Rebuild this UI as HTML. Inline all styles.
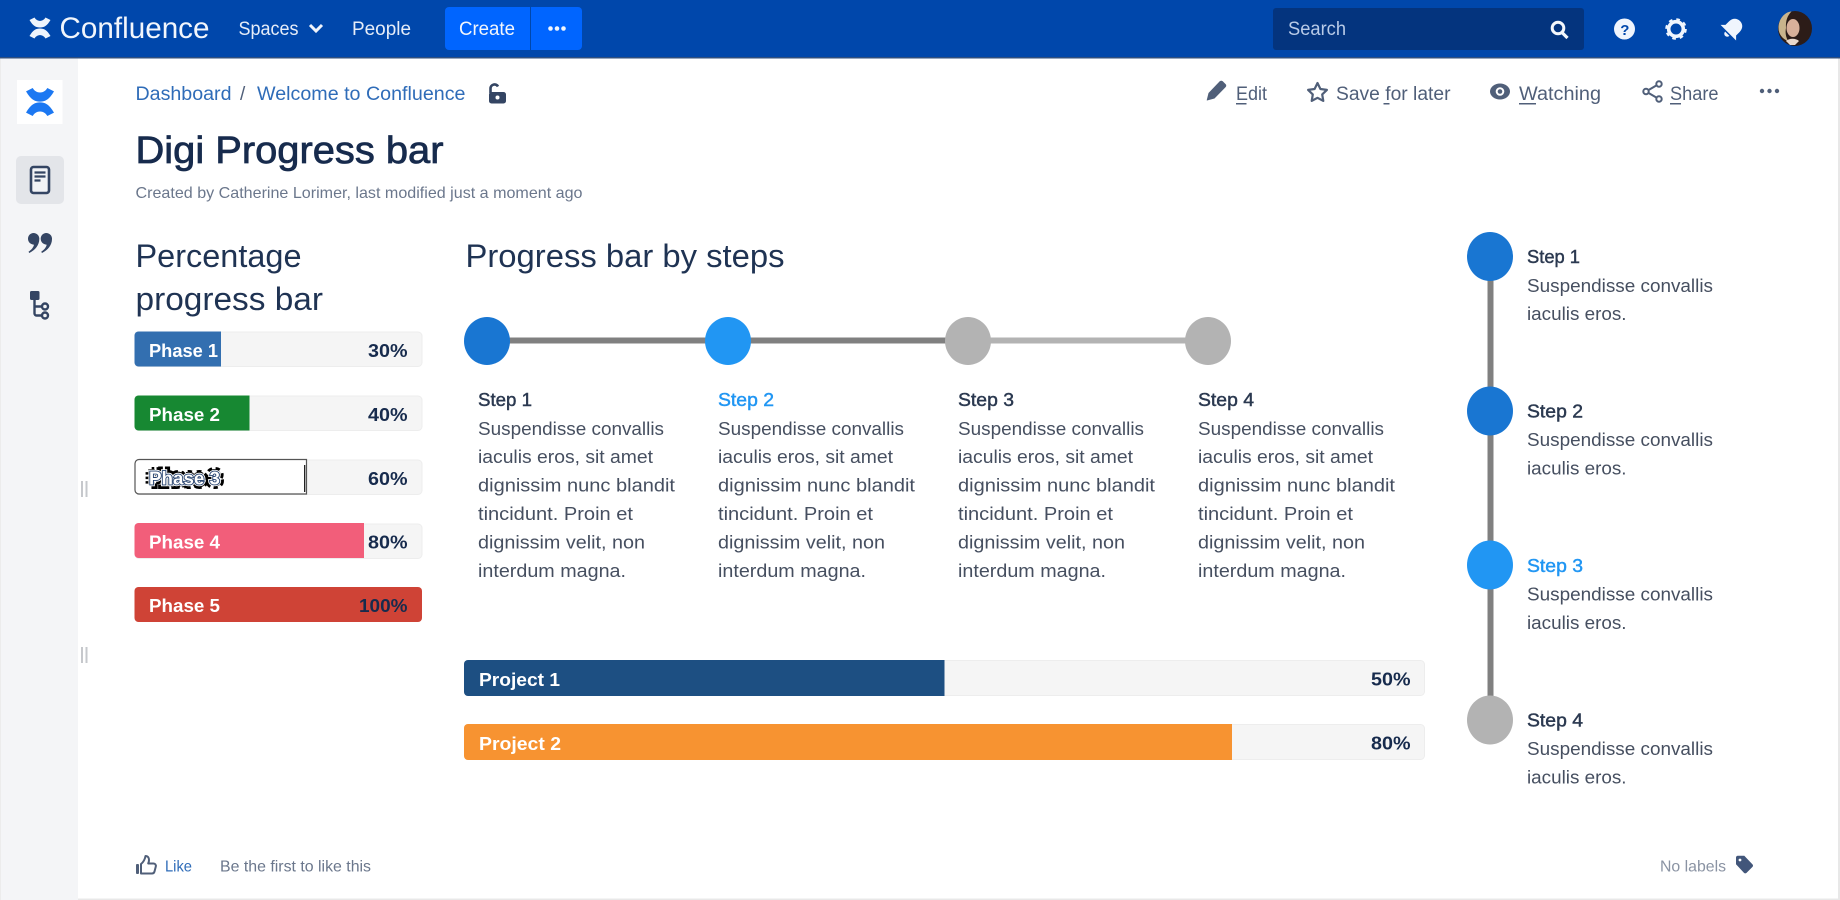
<!DOCTYPE html>
<html lang="en"><head><meta charset="utf-8"><title>Digi Progress bar</title>
<style>
html,body{margin:0;padding:0;background:#fff;width:1840px;height:900px;overflow:hidden}
svg{display:block;position:absolute;left:0;top:0;filter:blur(.3px)}
text{font-family:"Liberation Sans",sans-serif;white-space:pre}
.nav{fill:#e6edf8;font-size:19px}
.link{fill:#2f6cb8;font-size:19px}
.act{fill:#505f79;font-size:19px}
.h{fill:#1f3353;font-size:32px}
.st{fill:#2b3950;font-size:18.5px;stroke:#2b3950;stroke-width:.45px}
.bl{fill:#2196f3;stroke:#2196f3}
.bd{fill:#464f60;font-size:18.5px}
.lab{fill:#fff;font-size:18px;font-weight:bold}
.pct{fill:#172b4d;font-size:18px;font-weight:bold}
.m{fill:#6b778c;font-size:16px}
</style></head><body>
<svg xmlns="http://www.w3.org/2000/svg" width="1840" height="900" viewBox="0 0 1840 900">
<rect width="1840" height="900" fill="#fff"/>
<rect x="1838" width="2" height="900" fill="#e8e8e8"/>
<rect y="898.500" width="1840" height="1.500" fill="#e8e8e8"/>
<!-- sidebar -->
<rect y="58" width="78" height="842" fill="#f4f5f7"/>
<rect x="0" y="58" width="1" height="842" fill="#ececec"/>
<rect x="17" y="80" width="45.500" height="44" fill="#fff"/>
<g transform="translate(-13.3 64.67) scale(1.333)" fill="#1c78f2">
<path d="M29.500 20L34.500 17.500C37 22 43 22 45.500 17.500L50.500 20C47 26 44 27.700 40 27.700S33 26 29.500 20z"/>
<path d="M29.500 36L34.500 38.500C37 34 43 34 45.500 38.500L50.500 36C47 30 44 28.300 40 28.300S33 30 29.500 36z"/>
</g>
<rect x="16" y="156" width="48" height="48" rx="5" fill="#e3e5e9"/>
<rect x="31" y="167" width="18" height="26" rx="2.500" fill="#f1f3f6" stroke="#344563" stroke-width="2.600"/>
<path d="M34.500 172.500h11M34.500 176.500h11M34.500 180.500h6" stroke="#344563" stroke-width="2.200" fill="none"/>
<path fill="#344563" d="M33.500 233a5.800 5.800 0 0 1 5.800 6c0 6-4 11-10 14l-.8-1.200c3-2 5-4.500 5.500-7-3.200-.3-6-2.500-6-6 0-3.300 2.500-5.800 5.500-5.800zM46.200 233a5.800 5.800 0 0 1 5.800 6c0 6-4 11-10 14l-.8-1.200c3-2 5-4.500 5.500-7-3.200-.3-6-2.500-6-6 0-3.300 2.500-5.800 5.500-5.800z"/>
<rect x="30" y="291" width="9.500" height="9" rx="1.500" fill="#344563"/>
<path d="M34.500 298v15.500a2 2 0 0 0 2 2h6M34.500 306.500h8" fill="none" stroke="#344563" stroke-width="2.400"/>
<circle cx="45" cy="306.500" r="3" fill="#f4f5f7" stroke="#344563" stroke-width="2.400"/>
<circle cx="45" cy="315.500" r="3" fill="#f4f5f7" stroke="#344563" stroke-width="2.400"/>
<path d="M82 481v16M86.500 481v16M82 647v16M86.500 647v16" stroke="#c6c8cc" stroke-width="2" fill="none"/>
<!-- header -->
<rect width="1840" height="57" fill="#0047ab"/>
<rect y="57" width="1840" height="1.500" fill="#2f4f7f"/>
<g fill="#eef4fc">
<path d="M29.500 20L34.500 17.500C37 22 43 22 45.500 17.500L50.500 20C47 26 44 27.500 40 27.500S33 26 29.500 20z"/>
<path d="M29.500 36L34.500 38.500C37 34 43 34 45.500 38.500L50.500 36C47 30 44 28.500 40 28.500S33 30 29.500 36z"/>
</g>
<text x="59.500" y="38" font-size="30" fill="#f2f6fc" textLength="150" lengthAdjust="spacingAndGlyphs">Confluence</text>
<text class="nav" x="238.500" y="35" textLength="60" lengthAdjust="spacingAndGlyphs">Spaces</text>
<path d="M310 25l6 6 6-6" fill="none" stroke="#f0f4fb" stroke-width="3"/>
<text class="nav" x="352" y="35" textLength="59" lengthAdjust="spacingAndGlyphs">People</text>
<path d="M449 7h81v43h-81a4 4 0 0 1-4-4V11a4 4 0 0 1 4-4z" fill="#0065ff"/>
<path d="M531 7h47a4 4 0 0 1 4 4v35a4 4 0 0 1-4 4h-47z" fill="#0065ff"/>
<text x="459" y="35" font-size="19" fill="#f2f6fc" textLength="56" lengthAdjust="spacingAndGlyphs">Create</text>
<g fill="#f2f6fc"><circle cx="550.500" cy="28.500" r="2.300"/><circle cx="557" cy="28.500" r="2.300"/><circle cx="563.500" cy="28.500" r="2.300"/></g>
<rect x="1273" y="8" width="311" height="42" rx="3" fill="#04347e"/>
<text x="1288" y="35" font-size="19" fill="#b9cbe8" textLength="58" lengthAdjust="spacingAndGlyphs">Search</text>
<circle cx="1558" cy="28" r="5.800" fill="none" stroke="#f4f7fc" stroke-width="3"/>
<path d="M1562 32.500l5.500 5.500" stroke="#f4f7fc" stroke-width="3.200"/>
<circle cx="1624.500" cy="29" r="10.500" fill="#f0f5fd"/>
<text x="1620.300" y="35" font-size="15" font-weight="bold" fill="#0047ab">?</text>
<circle cx="1676" cy="29" r="7.300" fill="none" stroke="#f0f5fd" stroke-width="3.600"/>
<circle cx="1676" cy="29" r="9.800" fill="none" stroke="#f0f5fd" stroke-width="2" stroke-dasharray="3.700 4"/>
<g transform="translate(1731.500 29.500) rotate(45)" fill="#f0f5fd">
<path d="M0-12c4.500 0 7.500 3.300 7.500 8v5l3.500 3.500H-11L-7.500 1v-5c0-4.700 3-8 7.500-8z"/>
<path d="M-3 6h6a3 3 0 0 1-6 0z"/>
</g>
<ellipse cx="1795" cy="28.500" rx="17" ry="17.500" fill="#2c1c18"/>
<path d="M1778.500 28c0-9 6-16 13-16.500-4 4-6 9-5.500 16.500-1 5 0 9 2 13-5.500-2-9.500-7-9.500-13z" fill="#c9b48c"/>
<ellipse cx="1793" cy="28" rx="6.500" ry="9" fill="#d8b09a"/>
<path d="M1786 41c3-3 10-3 13 0l-4 4h-5z" fill="#e8d8cc"/>
<!-- breadcrumb -->
<text class="link" x="135.500" y="100" textLength="96" lengthAdjust="spacingAndGlyphs">Dashboard</text>
<text x="240" y="100" font-size="19" fill="#505f79">/</text>
<text class="link" x="257" y="100" textLength="208.500" lengthAdjust="spacingAndGlyphs">Welcome to Confluence</text>
<path d="M490.500 93v-4.500a4 4 0 0 1 7.500-2" fill="none" stroke="#344563" stroke-width="2.600"/>
<rect x="489" y="92" width="17" height="11.500" rx="2.500" fill="#344563"/>
<circle cx="497.500" cy="97.500" r="2" fill="#fff"/>
<!-- actions -->
<path fill="#505f79" d="M1208.500 93l11-11.500c1-1 2.500-1 3.500 0l2.500 2.500c1 1 1 2.300 0 3.300L1214.500 98.500l-7.500 2-.3-.3z"/>
<text class="act" x="1236" y="100" textLength="31" lengthAdjust="spacingAndGlyphs">Edit</text>
<rect x="1236" y="103" width="10.500" height="1.500" fill="#505f79"/>
<path fill="none" stroke="#505f79" stroke-width="2.200" stroke-linejoin="round" d="M1317.500 83l2.900 6 6.500.9-4.700 4.500 1.100 6.500-5.800-3.100-5.800 3.100 1.100-6.500-4.700-4.500 6.500-.9z"/>
<text class="act" x="1336" y="100" textLength="114.500" lengthAdjust="spacingAndGlyphs">Save for later</text>
<rect x="1383.500" y="103" width="6" height="1.500" fill="#505f79"/>
<ellipse cx="1500" cy="91.500" rx="10" ry="8" fill="#505f79"/>
<circle cx="1500" cy="91.500" r="4.300" fill="#fff"/>
<circle cx="1500" cy="91.500" r="2.300" fill="#505f79"/>
<text class="act" x="1519" y="100" textLength="82" lengthAdjust="spacingAndGlyphs">Watching</text>
<rect x="1519" y="103" width="17" height="1.500" fill="#505f79"/>
<path d="M1658 84.500l-12 7 12 7" fill="none" stroke="#505f79" stroke-width="2"/>
<circle cx="1659" cy="84" r="2.700" fill="#fff" stroke="#505f79" stroke-width="2"/>
<circle cx="1646" cy="91.500" r="2.700" fill="#fff" stroke="#505f79" stroke-width="2"/>
<circle cx="1659" cy="99" r="2.700" fill="#fff" stroke="#505f79" stroke-width="2"/>
<text class="act" x="1670" y="100" textLength="48.500" lengthAdjust="spacingAndGlyphs">Share</text>
<rect x="1670" y="103" width="11" height="1.500" fill="#505f79"/>
<g fill="#505f79"><circle cx="1762" cy="91" r="2.200"/><circle cx="1769.500" cy="91" r="2.200"/><circle cx="1777" cy="91" r="2.200"/></g>
<!-- title -->
<text x="135.500" y="163" font-size="38" fill="#172b4d" stroke="#172b4d" stroke-width=".75" textLength="308" lengthAdjust="spacingAndGlyphs">Digi Progress bar</text>
<text class="m" x="135.500" y="198" textLength="447" lengthAdjust="spacingAndGlyphs">Created by Catherine Lorimer, last modified just a moment ago</text>
<!-- left column -->
<text class="h" x="135.500" y="267" textLength="166" lengthAdjust="spacingAndGlyphs">Percentage</text>
<text class="h" x="135.500" y="310" textLength="187.500" lengthAdjust="spacingAndGlyphs">progress bar</text>
<g fill="#f5f5f5" stroke="#ededed" stroke-width="1">
<rect x="135" y="332" width="287" height="34.500" rx="4"/>
<rect x="135" y="396" width="287" height="34.500" rx="4"/>
<rect x="135" y="460" width="287" height="34.500" rx="4"/>
<rect x="135" y="524" width="287" height="34.500" rx="4"/>
</g>
<path d="M138.500 331.500H221v35h-82.500a4 4 0 0 1-4-4v-27a4 4 0 0 1 4-4z" fill="#336fb0"/>
<path d="M138.500 395.500H249.500v35H138.500a4 4 0 0 1-4-4v-27a4 4 0 0 1 4-4z" fill="#178832"/>
<path d="M139 459.500H306.500v34.500H139a4 4 0 0 1-4-4v-26.500a4 4 0 0 1 4-4z" fill="#fff" stroke="#555" stroke-width="1.200"/>
<rect x="304" y="465" width="1.300" height="27" fill="#222"/>
<path d="M138.500 523H364v35H138.500a4 4 0 0 1-4-4v-27a4 4 0 0 1 4-4z" fill="#f25e7a"/>
<rect x="134.500" y="587" width="287.500" height="35" rx="4" fill="#cf4336"/>
<text class="lab" x="149" y="357" textLength="69" lengthAdjust="spacingAndGlyphs">Phase 1</text>
<text class="lab" x="149" y="421" textLength="71" lengthAdjust="spacingAndGlyphs">Phase 2</text>
<text class="lab" aria-hidden="true" x="149" y="484.500" textLength="71" lengthAdjust="spacingAndGlyphs" stroke="#000" stroke-width="9" stroke-dasharray="2.500 2">Phase 3</text>
<text class="lab" aria-hidden="true" x="149" y="484.500" textLength="71" lengthAdjust="spacingAndGlyphs" stroke="#fff" stroke-width="3.500">Phase 3</text>
<text class="lab" x="149" y="484.500" textLength="71" lengthAdjust="spacingAndGlyphs" stroke="#27436f" stroke-width="1.800" style="paint-order:stroke">Phase 3</text>
<text class="lab" x="149" y="548.500" textLength="71" lengthAdjust="spacingAndGlyphs">Phase 4</text>
<text class="lab" x="149" y="612" textLength="71" lengthAdjust="spacingAndGlyphs">Phase 5</text>
<text class="pct" x="368" y="357" textLength="39.500" lengthAdjust="spacingAndGlyphs">30%</text>
<text class="pct" x="368" y="421" textLength="39.500" lengthAdjust="spacingAndGlyphs">40%</text>
<text class="pct" x="368" y="485" textLength="39.500" lengthAdjust="spacingAndGlyphs">60%</text>
<text class="pct" x="368" y="548.500" textLength="39.500" lengthAdjust="spacingAndGlyphs">80%</text>
<text class="pct" x="359" y="612" textLength="48.500" lengthAdjust="spacingAndGlyphs">100%</text>
<!-- steps -->
<text class="h" x="465.500" y="267" textLength="319" lengthAdjust="spacingAndGlyphs">Progress bar by steps</text>
<rect x="487" y="337.500" width="481" height="6" fill="#808080"/>
<rect x="968" y="337.500" width="240" height="6" fill="#b3b3b3"/>
<ellipse cx="487" cy="341" rx="23" ry="24" fill="#1976d2"/>
<ellipse cx="728" cy="341" rx="23" ry="24" fill="#2196f3"/>
<ellipse cx="968" cy="341" rx="23" ry="24" fill="#b3b3b3"/>
<ellipse cx="1208" cy="341" rx="23" ry="24" fill="#b3b3b3"/>
<text class="st" x="478" y="406" textLength="54" lengthAdjust="spacingAndGlyphs">Step 1</text>
<text class="st bl" x="718" y="406" textLength="56" lengthAdjust="spacingAndGlyphs">Step 2</text>
<text class="st" x="958" y="406" textLength="56" lengthAdjust="spacingAndGlyphs">Step 3</text>
<text class="st" x="1198" y="406" textLength="56" lengthAdjust="spacingAndGlyphs">Step 4</text>
<g class="bd">
<text class="bd" x="478" y="435" textLength="186" lengthAdjust="spacingAndGlyphs">Suspendisse convallis</text>
<text class="bd" x="478" y="463" textLength="175" lengthAdjust="spacingAndGlyphs">iaculis eros, sit amet</text>
<text class="bd" x="478" y="491.500" textLength="197" lengthAdjust="spacingAndGlyphs">dignissim nunc blandit</text>
<text class="bd" x="478" y="520" textLength="155" lengthAdjust="spacingAndGlyphs">tincidunt. Proin et</text>
<text class="bd" x="478" y="548.500" textLength="167" lengthAdjust="spacingAndGlyphs">dignissim velit, non</text>
<text class="bd" x="478" y="577" textLength="148" lengthAdjust="spacingAndGlyphs">interdum magna.</text>
<text class="bd" x="718" y="435" textLength="186" lengthAdjust="spacingAndGlyphs">Suspendisse convallis</text>
<text class="bd" x="718" y="463" textLength="175" lengthAdjust="spacingAndGlyphs">iaculis eros, sit amet</text>
<text class="bd" x="718" y="491.500" textLength="197" lengthAdjust="spacingAndGlyphs">dignissim nunc blandit</text>
<text class="bd" x="718" y="520" textLength="155" lengthAdjust="spacingAndGlyphs">tincidunt. Proin et</text>
<text class="bd" x="718" y="548.500" textLength="167" lengthAdjust="spacingAndGlyphs">dignissim velit, non</text>
<text class="bd" x="718" y="577" textLength="148" lengthAdjust="spacingAndGlyphs">interdum magna.</text>
<text class="bd" x="958" y="435" textLength="186" lengthAdjust="spacingAndGlyphs">Suspendisse convallis</text>
<text class="bd" x="958" y="463" textLength="175" lengthAdjust="spacingAndGlyphs">iaculis eros, sit amet</text>
<text class="bd" x="958" y="491.500" textLength="197" lengthAdjust="spacingAndGlyphs">dignissim nunc blandit</text>
<text class="bd" x="958" y="520" textLength="155" lengthAdjust="spacingAndGlyphs">tincidunt. Proin et</text>
<text class="bd" x="958" y="548.500" textLength="167" lengthAdjust="spacingAndGlyphs">dignissim velit, non</text>
<text class="bd" x="958" y="577" textLength="148" lengthAdjust="spacingAndGlyphs">interdum magna.</text>
<text class="bd" x="1198" y="435" textLength="186" lengthAdjust="spacingAndGlyphs">Suspendisse convallis</text>
<text class="bd" x="1198" y="463" textLength="175" lengthAdjust="spacingAndGlyphs">iaculis eros, sit amet</text>
<text class="bd" x="1198" y="491.500" textLength="197" lengthAdjust="spacingAndGlyphs">dignissim nunc blandit</text>
<text class="bd" x="1198" y="520" textLength="155" lengthAdjust="spacingAndGlyphs">tincidunt. Proin et</text>
<text class="bd" x="1198" y="548.500" textLength="167" lengthAdjust="spacingAndGlyphs">dignissim velit, non</text>
<text class="bd" x="1198" y="577" textLength="148" lengthAdjust="spacingAndGlyphs">interdum magna.</text>
</g>
<!-- project bars -->
<rect x="464.500" y="660.500" width="960" height="35" rx="4" fill="#f5f5f5" stroke="#ededed"/>
<rect x="464.500" y="724.500" width="960" height="35" rx="4" fill="#f5f5f5" stroke="#ededed"/>
<path d="M468 660H944.500v36H468a4 4 0 0 1-4-4v-28a4 4 0 0 1 4-4z" fill="#1d4f82"/>
<path d="M468 724H1232v36H468a4 4 0 0 1-4-4v-28a4 4 0 0 1 4-4z" fill="#f79331"/>
<text class="lab" x="479" y="686" textLength="81" lengthAdjust="spacingAndGlyphs">Project 1</text>
<text class="lab" x="479" y="750" textLength="82" lengthAdjust="spacingAndGlyphs">Project 2</text>
<text class="pct" x="1371" y="685.500" textLength="39.500" lengthAdjust="spacingAndGlyphs">50%</text>
<text class="pct" x="1371" y="749.500" textLength="39.500" lengthAdjust="spacingAndGlyphs">80%</text>
<!-- vertical timeline -->
<rect x="1487.500" y="256" width="6" height="464" fill="#808080"/>
<ellipse cx="1490" cy="256.500" rx="23" ry="24.500" fill="#1976d2"/>
<ellipse cx="1490" cy="411" rx="23" ry="24.500" fill="#1976d2"/>
<ellipse cx="1490" cy="565" rx="23" ry="24.500" fill="#2196f3"/>
<ellipse cx="1490" cy="720" rx="23" ry="24.500" fill="#b3b3b3"/>
<text class="st" x="1527" y="263" textLength="53" lengthAdjust="spacingAndGlyphs">Step 1</text>
<text class="bd" x="1527" y="292" textLength="186" lengthAdjust="spacingAndGlyphs">Suspendisse convallis</text>
<text class="bd" x="1527" y="320" textLength="99.500" lengthAdjust="spacingAndGlyphs">iaculis eros.</text>
<text class="st" x="1527" y="417.500" textLength="56" lengthAdjust="spacingAndGlyphs">Step 2</text>
<text class="bd" x="1527" y="446" textLength="186" lengthAdjust="spacingAndGlyphs">Suspendisse convallis</text>
<text class="bd" x="1527" y="474.500" textLength="99.500" lengthAdjust="spacingAndGlyphs">iaculis eros.</text>
<text class="st bl" x="1527" y="572" textLength="56" lengthAdjust="spacingAndGlyphs">Step 3</text>
<text class="bd" x="1527" y="600.500" textLength="186" lengthAdjust="spacingAndGlyphs">Suspendisse convallis</text>
<text class="bd" x="1527" y="629" textLength="99.500" lengthAdjust="spacingAndGlyphs">iaculis eros.</text>
<text class="st" x="1527" y="726.500" textLength="56" lengthAdjust="spacingAndGlyphs">Step 4</text>
<text class="bd" x="1527" y="755" textLength="186" lengthAdjust="spacingAndGlyphs">Suspendisse convallis</text>
<text class="bd" x="1527" y="783.500" textLength="99.500" lengthAdjust="spacingAndGlyphs">iaculis eros.</text>
<!-- footer -->
<rect x="136" y="864" width="3" height="10" rx="1" fill="#505f79"/>
<path d="M141 873.500V864c2.500-2 4-5 4.500-8 2.300 0 3.500 1.800 3.500 4 0 1.300-.3 2.500-.8 3.500h5.300c1.700 0 2.700 1.500 2.300 3l-1.300 5c-.3 1.300-1.300 2-2.600 2z" fill="none" stroke="#505f79" stroke-width="2" stroke-linejoin="round"/>
<text x="165" y="871.500" font-size="16" fill="#2f6cb8" textLength="27" lengthAdjust="spacingAndGlyphs">Like</text>
<text class="m" x="220" y="871.500" textLength="151" lengthAdjust="spacingAndGlyphs">Be the first to like this</text>
<text x="1660" y="871.500" font-size="16" fill="#8a93a3" textLength="66" lengthAdjust="spacingAndGlyphs">No labels</text>
<path fill="#42567a" d="M1736 857.500c0-1 .8-1.800 1.800-1.800h6.500l8.200 8.700c.7.700.7 1.800 0 2.500l-6 6c-.7.700-1.800.7-2.500 0l-8-8.700z"/>
<circle cx="1740" cy="860" r="1.400" fill="#fff"/>
</svg>
</body></html>
